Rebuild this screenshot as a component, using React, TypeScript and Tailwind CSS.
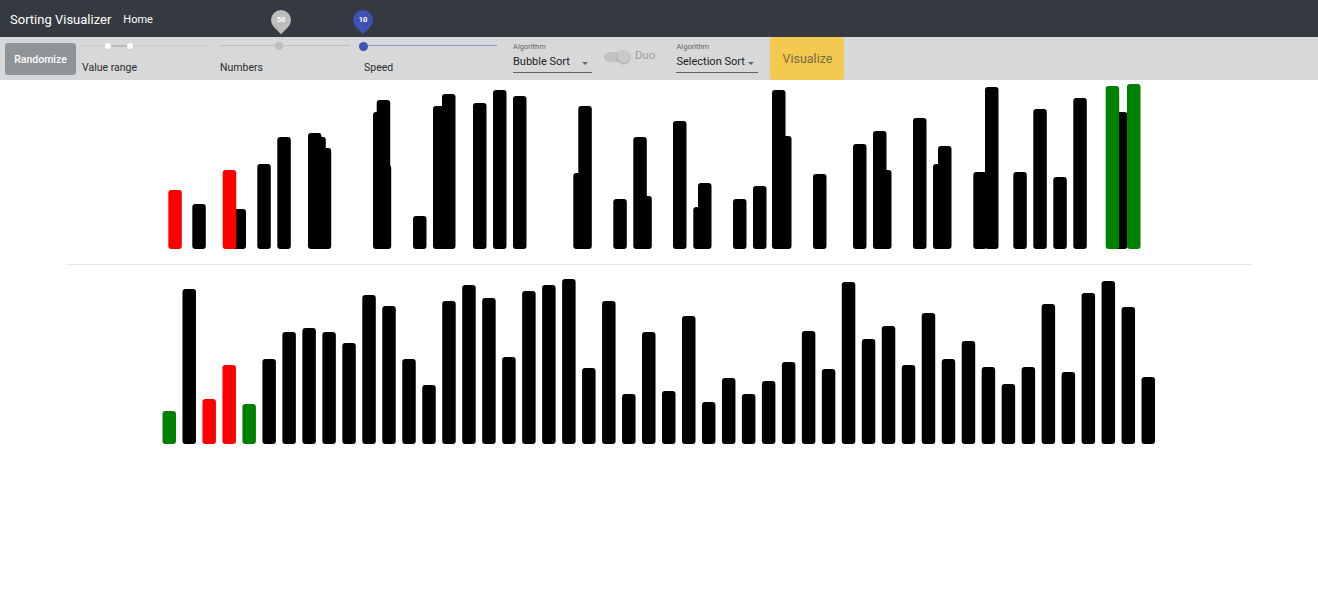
import React from 'react';

type Bar = { x: number; top: number; color?: string };

const RED = '#ff0000';
const GREEN = '#008000';

// top chart is caught mid-animation, so bars overlap
const topBars: Bar[] = [
  { x: 192.3, top: 204 },
  { x: 232.5, top: 209 },
  { x: 257.3, top: 164 },
  { x: 277.3, top: 137 },
  { x: 308, top: 133 },
  { x: 312.3, top: 137 },
  { x: 317.7, top: 148 },
  { x: 373, top: 112 },
  { x: 376.7, top: 100 },
  { x: 377.7, top: 165 },
  { x: 413, top: 216 },
  { x: 433, top: 106 },
  { x: 442, top: 94 },
  { x: 473, top: 103 },
  { x: 493, top: 90 },
  { x: 513, top: 96 },
  { x: 573.3, top: 173 },
  { x: 578.3, top: 106 },
  { x: 613.3, top: 199 },
  { x: 633.3, top: 137 },
  { x: 638.3, top: 196 },
  { x: 673, top: 121 },
  { x: 693.3, top: 207 },
  { x: 698, top: 183 },
  { x: 733, top: 199 },
  { x: 753, top: 186 },
  { x: 772, top: 90 },
  { x: 778, top: 136 },
  { x: 813, top: 174 },
  { x: 853, top: 144 },
  { x: 873, top: 131 },
  { x: 878, top: 170 },
  { x: 913, top: 118 },
  { x: 933, top: 164 },
  { x: 938, top: 146 },
  { x: 973.3, top: 172 },
  { x: 985, top: 87 },
  { x: 1013.3, top: 172 },
  { x: 1033.3, top: 109 },
  { x: 1053.3, top: 177 },
  { x: 1073.3, top: 98 },
  { x: 1114, top: 112 },
  { x: 168.3, top: 190, color: RED },
  { x: 222.7, top: 170, color: RED },
  { x: 1105.7, top: 86, color: GREEN },
  { x: 1127, top: 84, color: GREEN },
];

const bottomTops = [
  411, 289, 399, 365, 404, 359, 332, 328, 332, 343, 295, 306, 359, 385, 301, 285, 298, 357, 291, 285, 279, 368, 301,
  394, 332, 391, 316, 402, 378, 394, 381, 362, 331, 369, 282, 339, 326, 365, 313, 359, 341, 367, 384, 367, 304, 372,
  293, 281, 307, 377,
];
const bottomColors: Record<number, string> = { 0: GREEN, 2: RED, 3: RED, 4: GREEN };
const bottomBars: Bar[] = bottomTops.map((top, i) => ({ x: 162.5 + i * 19.98, top, color: bottomColors[i] }));

function Chart({ bars, offsetY, base, height }: { bars: Bar[]; offsetY: number; base: number; height: number }) {
  return (
    <svg width={1186} height={height} viewBox={`0 0 1186 ${height}`} className="block">
      <g transform={`translate(-66 ${-offsetY})`}>
        {bars.map((b, i) => (
          <rect key={i} x={b.x} y={b.top} width={13.5} height={base - b.top} rx={3} fill={b.color ?? '#000'} />
        ))}
      </g>
    </svg>
  );
}

function ValueBubble({ value, color, left }: { value: string; color: string; left: number }) {
  return (
    <div className="absolute top-[-27px] w-[20px] h-[20px]" style={{ left: left - 10 }}>
      <div className={`absolute inset-0 rounded-[50%_50%_50%_0] -rotate-45 ${color}`} />
      <span className="relative flex h-full items-center justify-center text-[7.5px] font-bold text-white">{value}</span>
    </div>
  );
}

function RangeSlider() {
  return (
    <div className="ml-[4px] flex w-[130px] flex-col">
      <div className="relative h-[18px]">
        <div className="absolute left-0 right-0 top-[8px] h-[1px] bg-[#c9cacc]" />
        <div className="absolute left-[28px] w-[22px] top-[8px] h-[2px] bg-[#bdbdbd]" />
        <div className="absolute left-[25px] top-[6px] h-[6px] w-[6px] rounded-full bg-white" />
        <div className="absolute left-[47px] top-[6px] h-[6px] w-[6px] rounded-full bg-white" />
      </div>
      <span className="mt-[7px] ml-[2px] text-[10.5px] leading-[12px] text-[#2b2b2b]">Value range</span>
    </div>
  );
}

function NumbersSlider() {
  return (
    <div className="ml-[10px] flex w-[130px] flex-col">
      <div className="relative h-[18px]">
        <div className="absolute left-0 right-0 top-[8px] h-[1px] bg-[#bdbdbd]" />
        <div className="absolute left-[55px] top-[5px] h-[8px] w-[8px] rounded-full bg-[#bdbdbd]" />
        <ValueBubble value="50" color="bg-[#bdbdbd]" left={61} />
      </div>
      <span className="mt-[6.5px] text-[10.5px] leading-[12px] text-[#2b2b2b]">Numbers</span>
    </div>
  );
}

function SpeedSlider() {
  return (
    <div className="ml-[13px] flex w-[134px] flex-col">
      <div className="relative h-[18px]">
        <div className="absolute left-0 right-0 top-[8px] h-[1px] bg-[#8f97c8]" />
        <div className="absolute left-[-4.5px] top-[4.5px] h-[9px] w-[9px] rounded-full bg-[#3f51b5]" />
        <ValueBubble value="10" color="bg-[#3f51b5]" left={0} />
      </div>
      <span className="mt-[7px] ml-[1px] text-[10.5px] leading-[12px] text-[#2b2b2b]">Speed</span>
    </div>
  );
}

function AlgoSelect({ value, width, className }: { value: string; width: string; className: string }) {
  return (
    <div className={`flex flex-col pt-[6px] ${width} ${className}`}>
      <span className="text-[7.5px] leading-[8px] text-[#666]">Algorithm</span>
      <div className="flex h-[22px] items-end justify-between border-b border-[#5f5f5f] pb-[3px]">
        <span className="text-[11px] leading-[14px] text-[#222]">{value}</span>
        <span className="mb-[4px] mr-[4px] h-0 w-0 border-x-[3.5px] border-t-[3.5px] border-x-transparent border-t-[#666]" />
      </div>
    </div>
  );
}

export default function App() {
  return (
    <div className="min-h-screen bg-white font-['Roboto',sans-serif]">
      <header className="flex h-[37px] items-center bg-[#343a40] px-[10px] pt-[3px]">
        <span className="text-[13px] text-white">Sorting Visualizer</span>
        <span className="ml-[12px] text-[11px] text-white">Home</span>
      </header>

      <div className="flex h-[43px] items-start bg-[#d7d8da]">
        <button className="ml-[5px] mt-[6px] h-[32px] w-[71px] rounded-[3px] bg-[#8f9498] pt-[1px] text-[10.5px] font-medium text-white">
          Randomize
        </button>
        <RangeSlider />
        <NumbersSlider />
        <SpeedSlider />
        <AlgoSelect value="Bubble Sort" width="w-[79px]" className="ml-[16px]" />
        <div className="ml-[12px] mt-[12px] flex items-center">
          <div className="relative h-[10px] w-[26px] rounded-full bg-[#c2c2c2]">
            <div className="absolute right-0 top-[-1.5px] h-[13px] w-[13px] rounded-full bg-[#c9c9c9] shadow-[0_1px_2px_rgba(0,0,0,0.25)]" />
          </div>
          <span className="ml-[5px] mt-[-2px] text-[11.5px] text-[#9a9a9a]">Duo</span>
        </div>
        <AlgoSelect value="Selection Sort" width="w-[82px]" className="ml-[21px]" />
        <button className="ml-[12px] h-[43px] w-[74px] rounded-[4px] bg-[#f3ca4f] pt-[1px] text-[12.5px] text-[#76693f]">
          Visualize
        </button>
      </div>

      <div className="mx-auto w-[1186px]">
        <div className="border-b border-[#e6e6e6]">
          <Chart bars={topBars} offsetY={80} base={249} height={184} />
        </div>
        <Chart bars={bottomBars} offsetY={265} base={444} height={190} />
      </div>
    </div>
  );
}
